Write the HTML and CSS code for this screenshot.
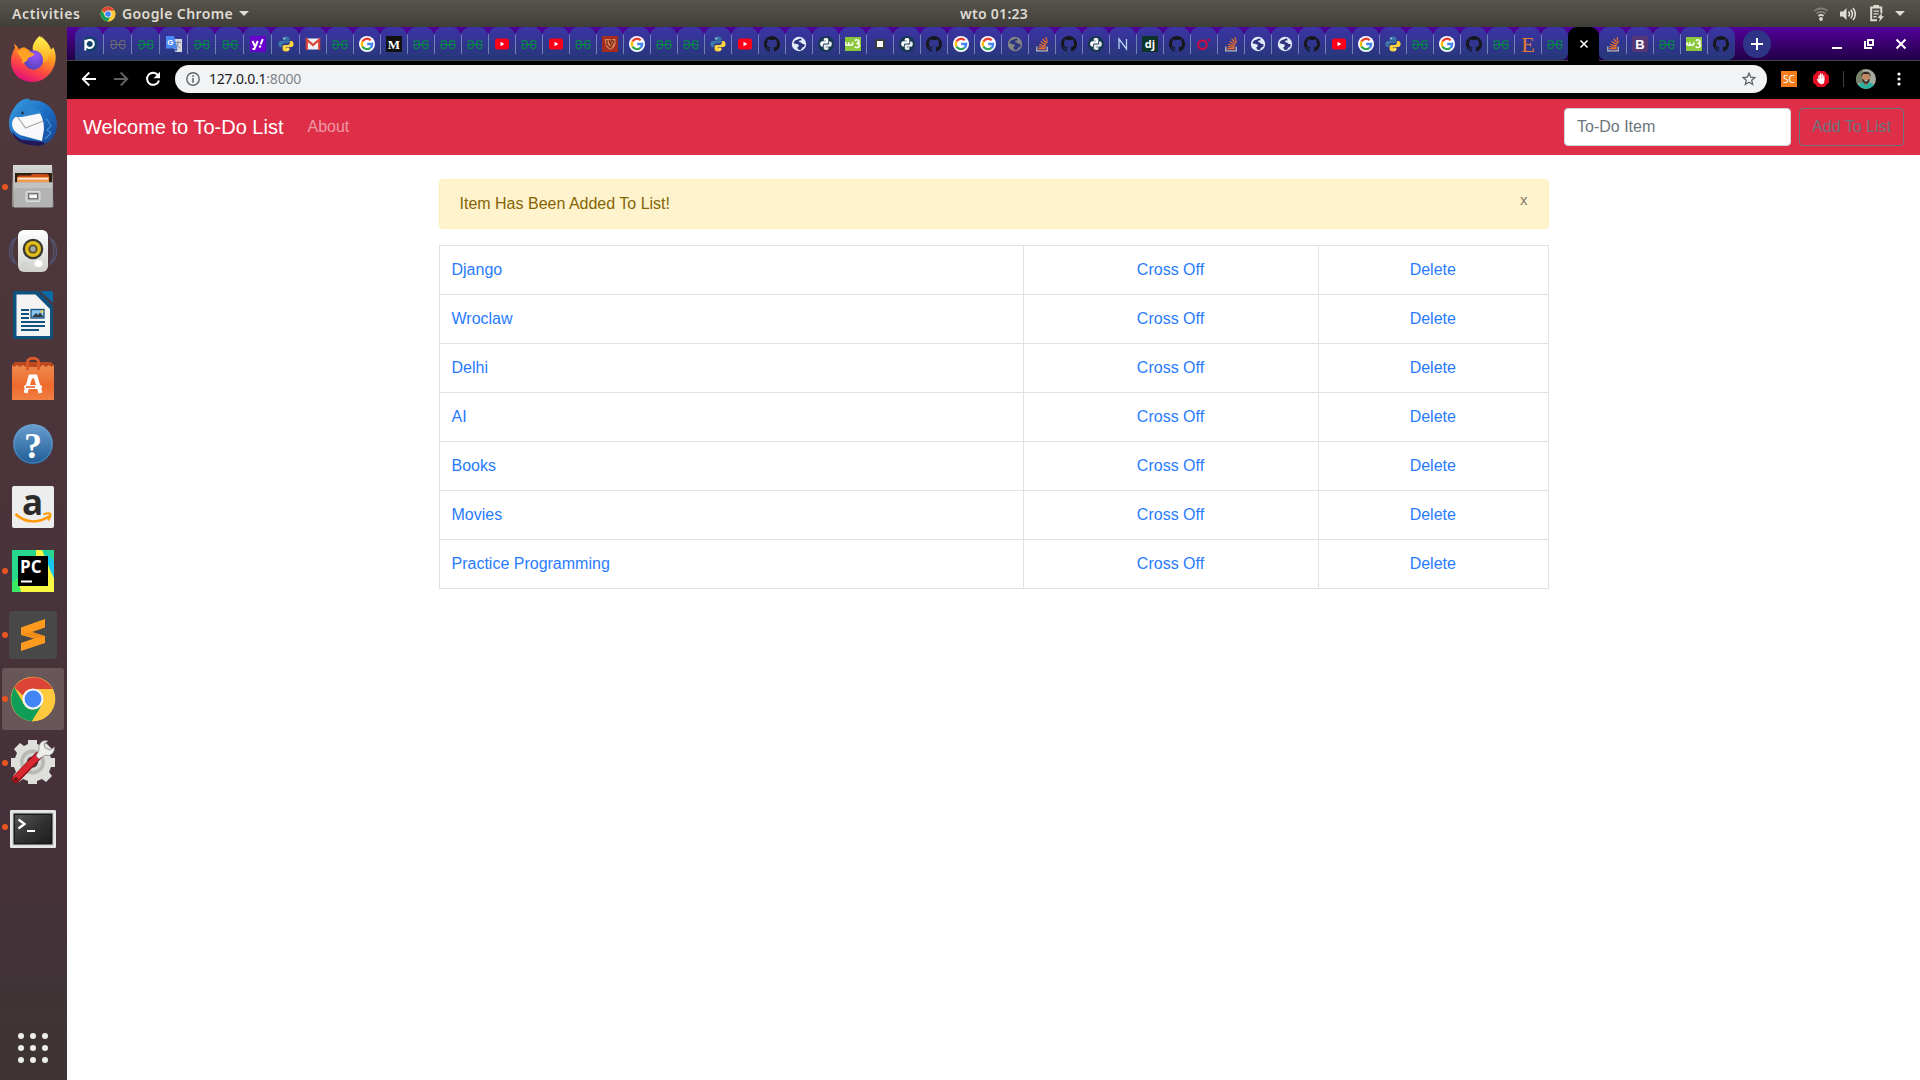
FILE: index.html
```html
<!DOCTYPE html>
<html lang="en">
<head>
<meta charset="utf-8">
<title>To-Do List</title>
<link rel="stylesheet" href="styles.css">
</head>
<body>
<svg class="sprite" aria-hidden="true">
  <defs>
    <linearGradient id="g-fox" x1=".8" y1="0" x2=".35" y2="1"><stop offset="0" stop-color="#fff44f"/><stop offset=".4" stop-color="#ff9a1f"/><stop offset=".7" stop-color="#ff4a41"/><stop offset="1" stop-color="#e2107b"/></linearGradient>
    <linearGradient id="g-flame" x1="0" y1="0" x2="0" y2="1"><stop offset="0" stop-color="#fff44f"/><stop offset="1" stop-color="#ffa41f"/></linearGradient>
    <radialGradient id="g-orb" cx=".6" cy=".3" r=".8"><stop offset="0" stop-color="#9a55f5"/><stop offset="1" stop-color="#4a3fb5"/></radialGradient>
    <linearGradient id="g-bird" x1="0" y1="0" x2="1" y2="1"><stop offset="0" stop-color="#3aa0e0"/><stop offset=".5" stop-color="#1d6fc4"/><stop offset="1" stop-color="#1b3f8c"/></linearGradient>
    <linearGradient id="g-steel" x1="0" y1="0" x2="0" y2="1"><stop offset="0" stop-color="#d8d8d8"/><stop offset="1" stop-color="#8f8f8f"/></linearGradient>
    <linearGradient id="g-white" x1="0" y1="0" x2="0" y2="1"><stop offset="0" stop-color="#fff"/><stop offset="1" stop-color="#cfcfcb"/></linearGradient>
    <linearGradient id="g-bag" x1="0" y1="0" x2="0" y2="1"><stop offset="0" stop-color="#ee8a4e"/><stop offset=".6" stop-color="#ee6a2c"/><stop offset="1" stop-color="#ef8044"/></linearGradient>
    <linearGradient id="g-help" x1="0" y1="0" x2="0" y2="1"><stop offset="0" stop-color="#6a9fd0"/><stop offset="1" stop-color="#1f5c95"/></linearGradient>
    <linearGradient id="g-dark" x1="0" y1="0" x2="1" y2="1"><stop offset="0" stop-color="#555"/><stop offset=".5" stop-color="#333"/><stop offset="1" stop-color="#1c1c1c"/></linearGradient>
    <linearGradient id="g-py" x1="0" y1="0" x2="1" y2="1"><stop offset="0" stop-color="#4b8bc0"/><stop offset="1" stop-color="#2c5f8c"/></linearGradient>
  </defs>

  <symbol id="gfg" viewBox="0 0 16 16"><g fill="none" stroke="currentColor" stroke-width="1.100"><path d="M14.700 6.800V4.500M14.700 6.200C13.600 3.700 9.400 3.800 9.400 8.400s4 4.900 5.300 3.300V8.500M1.300 6.800V4.500M1.300 6.200C2.400 3.700 6.600 3.800 6.600 8.400s-4 4.900-5.300 3.300V8.500"/><path d="M0 8.500h16"/></g></symbol>
  <symbol id="youtube" viewBox="0 0 16 16"><rect x="1" y="2.500" width="14" height="11" rx="2.500" fill="#ff0018"/><path d="M6.500 5.700v4.600L10.300 8z" fill="#fff"/></symbol>
  <symbol id="google" viewBox="0 0 16 16"><circle cx="8" cy="8" r="8" fill="#fff"/><g fill="none" stroke-width="2.300"><path d="M11.700 4.300A5.200 5.200 0 0 0 3.500 5.400" stroke="#ea4335"/><path d="M3.500 5.400a5.200 5.200 0 0 0 0 5.200" stroke="#fbbc05"/><path d="M3.500 10.600a5.200 5.200 0 0 0 7.900 1.300" stroke="#34a853"/><path d="M11.400 11.900A5.200 5.200 0 0 0 13.200 8H8.200" stroke="#4285f4"/></g></symbol>
  <symbol id="python" viewBox="0 0 16 16"><path d="M8 .5C5 .500 4.600 1.600 4.600 2.800v1.600h3.600V5H2.800C1.200 5 .400 6.400.400 8.200s.800 3 2.200 3h1.500V9.400c0-1.200 1-2.100 2.200-2.100h3.500c1 0 1.700-.8 1.700-1.700V2.800C11.500 1.300 10 .500 8 .500z" fill="url(#g-py)"/><path d="M8 15.500c3 0 3.500-1 3.500-2.200v-1.700H7.800V11h5.400c1.600 0 2.400-1.300 2.400-3s-.7-3.100-2.200-3.100h-1.500v1.800c0 1.200-1 2.200-2.200 2.200H6.300c-1 0-1.700.800-1.700 1.700v2.700c0 1.500 1.400 2.200 3.400 2.200z" fill="#ffd43b"/><circle cx="6.300" cy="2.600" r=".7" fill="#fff"/><circle cx="9.800" cy="13.400" r=".7" fill="#fff"/></symbol>
  <symbol id="pyround" viewBox="0 0 16 16"><circle cx="8" cy="8" r="8" fill="#173852"/><path d="M8 2C5.900 2 5.700 2.900 5.700 3.700v1h2.500v.6H4.300C3 5.300 2.200 6.300 2.200 8s.700 2.400 1.600 2.400h1.100V9.200c0-.9.700-1.600 1.600-1.600h2.600c.700 0 1.200-.5 1.200-1.200V3.700C10.300 2.600 9.400 2 8 2z" fill="#fff"/><path d="M8.200 14c2 0 2.300-.8 2.300-1.600v-1.100H8v-.6h3.900c1.300 0 1.900-.9 1.900-2.600s-.6-2.500-1.500-2.500h-1.200v1.300c0 .9-.7 1.600-1.600 1.600H6.900c-.7 0-1.200.5-1.200 1.200v2.600c0 1.100 1 1.700 2.500 1.700z" fill="#e3e9ee"/></symbol>
  <symbol id="github" viewBox="0 0 16 16"><path fill="#15171b" d="M8 0C3.580 0 0 3.580 0 8c0 3.540 2.290 6.530 5.470 7.590.4.070.55-.17.55-.38 0-.19-.01-.82-.01-1.490-2.010.37-2.530-.49-2.690-.94-.09-.23-.48-.94-.82-1.130-.28-.15-.68-.52-.01-.53.63-.01 1.080.58 1.230.82.72 1.210 1.870.87 2.330.66.07-.52.280-.87.510-1.070-1.780-.2-3.640-.89-3.640-3.950 0-.87.310-1.590.820-2.150-.08-.2-.36-1.020.08-2.120 0 0 .67-.21 2.200.820a7.640 7.640 0 0 1 4 0c1.530-1.040 2.200-.82 2.200-.82.440 1.100.160 1.920.080 2.120.510.560.820 1.270.820 2.150 0 3.070-1.870 3.750-3.650 3.950.290.250.540.730.540 1.480 0 1.070-.01 1.930-.01 2.200 0 .210.150.460.550.380A8 8 0 0 0 8 0z"/></symbol>
  <symbol id="globe" viewBox="0 0 16 16"><circle cx="8" cy="8" r="7.200" fill="currentColor"/><path d="M9.500 2.300 6.200 3.800 4 4.500 2.300 7.200l3.200.8 2 .4.300 2-1.600.8 1 2.500 2.600.3 1.600-2.400 1.800-.8.500-2.600-2.500-.4L10 6.400 8 6l.5-1.400 2.500-.3z" fill="#2e3580"/></symbol>
  <symbol id="w3" viewBox="0 0 16 16"><rect y="1" width="16" height="14" fill="#8cc83c"/><path d="M.8 6.300v1.400c0 2.200 3 2.200 3 0V6.300v1.400c0 2.200 3.400 2.200 4 0V6.300M9.800 4.600C11 3.500 14 3.500 14 5.400c0 1.400-1.500 1.900-2.600 1.900 1.500 0 3 .6 3 2.300 0 2.300-3.500 2.600-4.800 1" fill="none" stroke="#fff" stroke-width="1.500"/></symbol>
  <symbol id="stack" viewBox="0 0 16 16"><path d="M2.800 10.500v4.300h10.400v-4.300" fill="none" stroke="#bcb8b4" stroke-width="1.300"/><path d="M4.500 12.700h7M4.700 10.600l6.800.7M5.300 8.300l6.300 1.900M6.700 5.600l5.400 3.300M8.800 3l3.900 4.700M11.800 1.200l1.600 5.500" stroke="#f2702a" stroke-width="1.200"/></symbol>
  <symbol id="chrome" viewBox="0 0 48 48"><circle cx="24" cy="24" r="22.300" fill="#ffca3e"/><path d="M5.300 12.500A22.300 22.300 0 0 1 43.600 14H24A10.500 10.500 0 0 0 14 20.500z" fill="#db4437"/><path d="M5.300 12.500A22.300 22.300 0 0 0 23 46.200L33 30 24 34.500a10.500 10.500 0 0 1-9.100-5.200z" fill="#109d58"/><path d="m33.500 29-10.500 17.200a22.300 22.300 0 0 0 20.600-32.200H24z" fill="#ffca3e"/><circle cx="24" cy="24" r="10.500" fill="#f4f5f8"/><circle cx="24" cy="24" r="8.400" fill="#4285f4"/></symbol>
</svg>

<header class="topbar">
  <span class="activities">Activities</span>
  <div class="app-menu"><svg class="app-icon"><use href="#chrome"/></svg><span class="app-name">Google Chrome</span><i class="caret"></i></div>
  <span class="clock">wto 01:23</span>
  <div class="status">
    <svg class="wifi" width="14" height="14" viewBox="0 0 14 14" fill="none" stroke-width="1.700"><path d="M.5 4C4 .5 10 .5 13.500 4M2.500 6.500c2.500-2.200 6.500-2.200 9 0" stroke="#85827b"/><path d="M4.500 9c1.500-1.300 3.500-1.300 5 0" stroke="#dfdbd2"/><circle cx="7" cy="12" r="1.900" fill="#dfdbd2"/></svg>
    <svg width="16" height="14" viewBox="0 0 16 14"><path d="M0 4.500h3L6.500 1v12L3 9.500H0z" fill="#dfdbd2"/><path d="M8.500 4.500c1.200 1.500 1.200 3.500 0 5M10.800 2.700c2 2.600 2 6 0 8.600M13 1c3 3.500 3 8.500 0 12" fill="none" stroke="#dfdbd2" stroke-width="1.600"/></svg>
    <svg width="14" height="17" viewBox="0 0 14 17"><path d="M11.300 8V2.500H1.200v12.800H7" fill="none" stroke="#dfdbd2" stroke-width="2"/><path d="M3.500 0H9v2H3.500zM3.500 5.500h5.500v1.300H3.500zM3.500 8.300h5v1.300h-5zM3.500 11.100h3v1.300h-3zM12 7.500 7.500 13H10l-1 4 5-5.700h-2.500z" fill="#dfdbd2"/></svg>
    <i class="caret"></i>
  </div>
</header>

<div class="desktop">
  <nav class="dock">
    <a class="dock-item"><svg viewBox="0 0 48 48"><path d="M5 8.500C7 10 9 12.500 10 14.500c1.600-1.600 3.500-2.300 5.500-2.300l8 5 7-12C32 2.500 34 .8 31.500 1c2.500 2 9 7.500 10.500 13.500 1.500-.8 2-2.500 2-2.500 3 5 4 13 .5 20.500C40.800 41 33 47 23.500 47 11 47 2 38 2 26.500 2 19 5 15 6 12.700z" fill="url(#g-fox)"/><path d="M30.500 1C24 7 22 13 25 18c3 3 8 4 9.500 10 3-2 7-6 7-12.500C40.500 9 34 5 30.500 1z" fill="url(#g-flame)"/><circle cx="24.500" cy="25" r="9.700" fill="url(#g-orb)"/><path d="M8 17c4-3 8-3 11-1.500 1.500 1.800 4 2 6.500 3.500-1 2.500-4 3-6.500 4 0 3-3.500 4.500-6 5.500 1.500-3-2-7-5-11.500z" fill="#ffa326"/></svg></a>
    <a class="dock-item"><svg viewBox="0 0 48 48"><path d="M8 5C13 0 17-.5 21 0l-1 1.500C36-1 48 11 48 25c0 13-8 20-18 22l3-3-8 1C10 44 0 37 0 24 0 15 5 9 8 5z" fill="url(#g-bird)"/><path d="M3 32c4 6 8 9 13 9l18 2 2 2-6 2C15 46 5 43 3 32z" fill="#231755"/><path d="M3 24c1-5 4-7 7-7l20-4c3 4 5 10 5 17l-2 12-22-6c-5-3-8-6-8-12z" fill="#f8f8fb"/><path d="m8 17 8.500 12L34 22" fill="none" stroke="#aaa" stroke-width="1.200"/><path d="M7 18C9 8 15 5 22 7l13 8-2-1-20 4z" fill="#2d83cd"/><path d="m37 19 5 8-4 4 4 3-6 6" fill="none" stroke="#3d91d8" stroke-width="1.200"/><circle cx="13.500" cy="14" r="1.400" fill="#24364b"/></svg></a>
    <a class="dock-item is-running"><svg viewBox="0 0 48 48"><path d="M4 2h39l1.500 42H3z" fill="url(#g-steel)"/><path d="M6 10h37v10H6z" fill="#30200f"/><path d="M9 12.500h13l1-1.500h15l2 1.500v8H9z" fill="#cc4b1c"/><path d="M8 14h32v7H8z" fill="#f09a50"/><path d="M9 15.800h30" stroke="#fff" stroke-width="1.200"/><path d="M5 19.500h38.500V44.500H5z" fill="#b3b3b3"/><path d="M5 19.500h38.500V25H5z" fill="#c2c2c2"/><rect x="17" y="28.500" width="14" height="10" rx="1" fill="#c9c9c9" stroke="#dedede"/><rect x="19.700" y="30.800" width="9" height="5" fill="#f5f5f5" stroke="#4c4c4c"/></svg></a>
    <a class="dock-item"><svg viewBox="0 0 48 48"><g fill="none" stroke="#566596" stroke-width="1.300" opacity=".65"><path d="M8 10C2 16 1 30 8 38M5 12c-6 7-6 18 0 24M40 10c6 6 7 20 0 28M43 12c6 7 6 18 0 24"/></g><rect x="9" y="3" width="30" height="42" rx="6" fill="url(#g-white)"/><circle cx="24" cy="22" r="10.300" fill="#393931"/><circle cx="24" cy="22" r="8" fill="#e0bd1c"/><circle cx="24" cy="22" r="4.600" fill="#5a5122"/><circle cx="24" cy="22" r="2.700" fill="#aaa"/><ellipse cx="29.500" cy="36.500" rx="4" ry="3.500" fill="#fff"/><rect x="14" y="36" width="4" height="4" rx="1" fill="none" stroke="#ccc"/></svg></a>
    <a class="dock-item"><svg viewBox="0 0 48 48"><path d="M6 0h23l15 15v31a2 2 0 0 1-2 2H6a2 2 0 0 1-2-2V2a2 2 0 0 1 2-2z" fill="#10527e"/><path d="M31 0h11a2 2 0 0 1 2 2v10z" fill="#0b6aa5"/><path d="M7.500 3.500h19L41 18v27H7.500z" fill="#f4f4f4"/><path d="M12 18h8v2h-8zM12 22h8v2h-8zM12 26h8v2h-8zM12 30h24v2H12zM12 34h24v2H12zM12 38h18v2H12z" fill="#15527d"/><rect x="22" y="18.500" width="13" height="8.500" fill="#8ac6ee" stroke="#15527d" stroke-width="1.300"/><path d="m23 26 4-4 2 2 2-2.500 3.500 4.500z" fill="#303d47"/><circle cx="33" cy="20.500" r="1.500" fill="#f2c63c"/></svg></a>
    <a class="dock-item"><svg viewBox="0 0 48 48"><path d="M3 10h42v35H3z" fill="url(#g-bag)"/><path d="m3 10 3-3h36l3 3-2 2-3-2-3 2-3-2-3 2H17l-3-2-3 2-3-2-3 2z" fill="#b9481c"/><path d="M18.500 15V7c0-5 11-5 11 0v8" fill="none" stroke="#d9592a" stroke-width="3"/><path d="m16.500 38 5-16.500h5l5 16.500" fill="none" stroke="#fff" stroke-width="4"/><rect x="15" y="30" width="18" height="4" rx="2" fill="#fff"/><path d="M17 32h9" stroke="#e05b20" stroke-width="1.500"/></svg></a>
    <a class="dock-item"><svg viewBox="0 0 48 48"><circle cx="24" cy="25" r="20" fill="url(#g-help)"/><circle cx="24" cy="25" r="19" fill="none" stroke="#78a8d4" stroke-opacity=".5"/><text x="24" y="38.500" text-anchor="middle" class="glyph-help">?</text></svg></a>
    <a class="dock-item"><svg viewBox="0 0 48 48"><rect x="3" y="3" width="42" height="42" rx="2" fill="#ededed"/><text x="23.500" y="31.500" text-anchor="middle" class="glyph-amazon">a</text><path d="M6.500 31C17 41 31 40 40.500 33" fill="none" stroke="#ff9900" stroke-width="2.500"/><path d="M34.500 31.200c4-1.200 6.500-.7 7 0s-.8 4.200-2.500 6.200" fill="none" stroke="#ff9900" stroke-width="2"/></svg></a>
    <a class="dock-item is-running"><svg viewBox="0 0 48 48"><path d="M3 3h42v42H3z" fill="#26d78d"/><path d="m33 3 12 14v16l-6 2V9z" fill="#14c8ef"/><path d="M27 3h6l9 22 3 6v14H3V37l24-22z" fill="#f8f843"/><path d="m39 9 6 22V14L35 3z" fill="#18c6ee"/><path d="m3 36 6-5 3 14H3z" fill="#3bea62"/><path d="M9 9h30v30H9z" fill="#000"/><text x="11" y="25.500" class="glyph-pc">PC</text><path d="M12 34.500h11" stroke="#fff" stroke-width="2"/></svg></a>
    <a class="dock-item is-running"><svg viewBox="0 0 48 48"><rect width="48" height="48" rx="3" fill="#484848"/><path d="m12 16.500 24-8.500v8.500L23 21l13 4v7L12 40v-8l13-4.500L12 24z" fill="#ff9a1f"/><path d="m12 23 11-2 13 4.500L25 27.500z" fill="#f18d18"/></svg></a>
    <a class="dock-item is-running is-active"><svg><use href="#chrome"/></svg></a>
    <a class="dock-item is-running"><svg viewBox="0 0 48 48"><path d="M19 5V1h9v4l5 2 4-3 6 6-3 4 2 5h4v9h-4l-2 5 3 4-6 6-4-3-5 2v3h-9v-3l-5-2-4 3-6-6 3-4-2-5H2v-9h4l2-5-3-4 6-6 4 3z" fill="#dededb"/><circle cx="23.500" cy="23" r="12.500" fill="#b8b8b5"/><circle cx="23.500" cy="23" r="9" fill="#d5d5d3"/><circle cx="23.500" cy="23" r="5.500" fill="#3f3135"/><path d="m7 40 22-23" stroke="#8e1218" stroke-width="8" stroke-linecap="round"/><path d="m7 39 22-22" stroke="#da2832" stroke-width="6" stroke-linecap="round"/><circle cx="7" cy="40" r="1.800" fill="#521216"/><path d="m27 17 3 3 6-4c5 2 10-2 9.500-8L41 11l-5-2-1-4 4-3c-6-2-10 3-9 9z" fill="#eeeeec" stroke="#777" stroke-width=".7"/></svg></a>
    <a class="dock-item is-running"><svg viewBox="0 0 48 48"><rect x="1" y="7" width="46" height="38" rx="1.500" fill="#d8d8d6"/><rect x="2" y="8" width="44" height="36" fill="none" stroke="#f5f5f4"/><rect x="4.500" y="10.500" width="39" height="31" fill="#171717"/><rect x="6" y="12" width="36" height="28" fill="url(#g-dark)"/><path d="m9.500 16.500 6 4.500-6 4.500" fill="none" stroke="#fff" stroke-width="2.300"/><path d="M18 28h8" stroke="#fff" stroke-width="2"/></svg></a>
    <a class="apps-button"><i></i><i></i><i></i><i></i><i></i><i></i><i></i><i></i><i></i></a>
  </nav>

  <div class="window">
    <div class="tabstrip">
      <ul class="tabs">
        <li class="tab wide first"><svg viewBox="0 0 16 16"><circle cx="8" cy="8" r="7.500" fill="#10416b"/><path d="M2.400 14.500V3.800M2.800 7.500a4 4 0 1 1 0 .8" transform="translate(1)" fill="none" stroke="#fff" stroke-width="2.100"/></svg></li>
        <li class="tab wide"><svg class="gray"><use href="#gfg"/></svg></li>
        <li class="tab wide"><svg class="green"><use href="#gfg"/></svg></li>
        <li class="tab wide"><svg viewBox="0 0 16 16"><path d="M7 3h9v13H9z" fill="#d9d9dc"/><path d="M0 0h8l3.500 12.500H0z" fill="#4a89f3"/><path d="M11.500 12.500 8.500 13l1.500 3z" fill="#2b59b5"/><text x="1.300" y="9" class="glyph-tr">G</text><path d="M9.500 6.500H15M12 5v1.500c0 3-1 4-1.500 5M10.500 8c1 2 2 3 4 4" fill="none" stroke="#6d8290" stroke-width=".8"/></svg></li>
        <li class="tab wide"><svg class="green"><use href="#gfg"/></svg></li>
        <li class="tab wide"><svg class="green"><use href="#gfg"/></svg></li>
        <li class="tab wide"><svg viewBox="0 0 16 16"><path d="M0 0h16v16H0z" fill="#6a00d0"/><path d="m2.500 5 2.300 5M7.800 5l-3.500 8H2.500M12.800 3 10.700 8.300" fill="none" stroke="#fff" stroke-width="2"/><circle cx="10" cy="10.500" r="1.200" fill="#fff"/></svg></li>
        <li class="tab wide"><svg><use href="#python"/></svg></li>
        <li class="tab"><svg viewBox="0 0 16 16"><path d="M1.500 2.500h13v11h-13z" fill="#f3f3f3"/><path d="M1.800 14V3.600L8 9l6.200-5.400V14" fill="none" stroke="#d8433b" stroke-width="2.200"/></svg></li>
        <li class="tab"><svg class="green"><use href="#gfg"/></svg></li>
        <li class="tab"><svg><use href="#google"/></svg></li>
        <li class="tab"><svg viewBox="0 0 16 16"><path d="M0 0h16v16H0z" fill="#12100e"/><text x="8" y="12.500" text-anchor="middle" class="glyph-m">M</text></svg></li>
        <li class="tab"><svg class="green"><use href="#gfg"/></svg></li>
        <li class="tab"><svg class="green"><use href="#gfg"/></svg></li>
        <li class="tab"><svg class="green"><use href="#gfg"/></svg></li>
        <li class="tab"><svg><use href="#youtube"/></svg></li>
        <li class="tab"><svg class="green"><use href="#gfg"/></svg></li>
        <li class="tab"><svg><use href="#youtube"/></svg></li>
        <li class="tab"><svg class="green"><use href="#gfg"/></svg></li>
        <li class="tab"><svg viewBox="0 0 16 16"><path d="M0 0h16v16H0z" fill="#a42d20"/><path d="M2.500 3h11v4.500c0 3-2.500 5-5 6.500-3.500-2-5-4-5-6.500z" fill="#d98457"/><path d="M5 4v4.500L8.500 12 12 5.500 9.500 4l-1 4L7 4" fill="none" stroke="#7c2418" stroke-width="1.200"/></svg></li>
        <li class="tab"><svg><use href="#google"/></svg></li>
        <li class="tab"><svg class="green"><use href="#gfg"/></svg></li>
        <li class="tab"><svg class="green"><use href="#gfg"/></svg></li>
        <li class="tab"><svg><use href="#python"/></svg></li>
        <li class="tab"><svg><use href="#youtube"/></svg></li>
        <li class="tab"><svg><use href="#github"/></svg></li>
        <li class="tab"><svg class="pale"><use href="#globe"/></svg></li>
        <li class="tab"><svg><use href="#pyround"/></svg></li>
        <li class="tab"><svg><use href="#w3"/></svg></li>
        <li class="tab"><svg viewBox="0 0 16 16"><path d="M3 3h10v10H3z" fill="#3a3c40"/><path d="M5 5h6v6H5z" fill="#fff"/></svg></li>
        <li class="tab"><svg><use href="#pyround"/></svg></li>
        <li class="tab"><svg><use href="#github"/></svg></li>
        <li class="tab"><svg><use href="#google"/></svg></li>
        <li class="tab"><svg><use href="#google"/></svg></li>
        <li class="tab"><svg class="dim"><use href="#globe"/></svg></li>
        <li class="tab"><svg><use href="#stack"/></svg></li>
        <li class="tab"><svg><use href="#github"/></svg></li>
        <li class="tab"><svg><use href="#pyround"/></svg></li>
        <li class="tab"><svg viewBox="0 0 16 16"><path d="M4 13V3l7.500 10V3" fill="none" stroke="#b8d4f5" stroke-width="1.300"/></svg></li>
        <li class="tab"><svg viewBox="0 0 16 16"><path d="M0 0h16v16H0z" fill="#0c3428"/><text x="8" y="11.800" text-anchor="middle" class="glyph-dj">dj</text></svg></li>
        <li class="tab"><svg><use href="#github"/></svg></li>
        <li class="tab"><svg viewBox="0 0 16 16"><circle cx="6.500" cy="8.700" r="4.300" fill="none" stroke="#d3083b" stroke-width="2"/><circle cx="12.700" cy="4" r="1.300" fill="#d3083b"/></svg></li>
        <li class="tab"><svg><use href="#stack"/></svg></li>
        <li class="tab"><svg class="pale"><use href="#globe"/></svg></li>
        <li class="tab"><svg class="pale"><use href="#globe"/></svg></li>
        <li class="tab"><svg><use href="#github"/></svg></li>
        <li class="tab"><svg><use href="#youtube"/></svg></li>
        <li class="tab"><svg><use href="#google"/></svg></li>
        <li class="tab"><svg><use href="#python"/></svg></li>
        <li class="tab"><svg class="green"><use href="#gfg"/></svg></li>
        <li class="tab"><svg><use href="#google"/></svg></li>
        <li class="tab"><svg><use href="#github"/></svg></li>
        <li class="tab"><svg class="green"><use href="#gfg"/></svg></li>
        <li class="tab"><svg viewBox="0 0 16 16"><text x="8" y="15.500" text-anchor="middle" class="glyph-e">E</text></svg></li>
        <li class="tab before-active"><svg class="green"><use href="#gfg"/></svg></li>
        <li class="tab active"><svg viewBox="0 0 16 16"><path d="m4.500 4.500 7 7m0-7-7 7" stroke="#fff" stroke-width="1.500"/></svg></li>
        <li class="tab after-active"><svg><use href="#stack"/></svg></li>
        <li class="tab"><svg viewBox="0 0 16 16"><rect width="16" height="16" rx="2.500" fill="#553773"/><text x="8" y="12.700" text-anchor="middle" class="glyph-b">B</text></svg></li>
        <li class="tab"><svg class="green"><use href="#gfg"/></svg></li>
        <li class="tab"><svg><use href="#w3"/></svg></li>
        <li class="tab last"><svg><use href="#github"/></svg></li>
      </ul>
      <button class="new-tab"><svg width="14" height="14" viewBox="0 0 14 14"><path d="M7 1v12M1 7h12" stroke="#fff" stroke-width="2"/></svg></button>
      <div class="window-buttons">
        <svg viewBox="0 0 12 12"><path d="M1 10h10" stroke="#fff" stroke-width="2"/></svg>
        <svg viewBox="0 0 12 12"><path d="M5 2h5v5H5zM3 4H2v6h6V9" fill="none" stroke="#fff" stroke-width="2"/></svg>
        <svg viewBox="0 0 12 12"><path d="m1.500 1.500 9 9m0-9-9 9" stroke="#fff" stroke-width="2"/></svg>
      </div>
    </div>

    <div class="toolbar">
      <div class="nav-buttons">
        <svg viewBox="0 0 16 16"><path d="M15 8H2M8.300 1.500 1.800 8l6.500 6.500" fill="none" stroke="#fff" stroke-width="1.900"/></svg>
        <svg viewBox="0 0 16 16"><path d="M1 8h13M7.700 1.500 14.200 8l-6.500 6.500" fill="none" stroke="#626262" stroke-width="1.900"/></svg>
        <svg viewBox="0 0 16 16"><path d="M13.200 4.300A6.100 6.100 0 1 0 14 9.500" fill="none" stroke="#fff" stroke-width="2"/><path d="M15 .8v6.400H8.600z" fill="#fff"/></svg>
      </div>
      <div class="omnibox">
        <svg class="info" viewBox="0 0 14 14"><circle cx="7" cy="7" r="6.200" fill="none" stroke="#5f6368" stroke-width="1.400"/><path d="M7 6v4.700M7 3.300v1.600" stroke="#5f6368" stroke-width="1.500"/></svg>
        <span class="url">127.0.0.1<span class="port">:8000</span></span>
        <svg class="star" viewBox="0 0 14 14"><path d="m7 1.200 1.700 3.900 4.200.4-3.200 2.800 1 4.200L7 10.300l-3.700 2.200 1-4.200L1.100 5.500l4.200-.4z" fill="none" stroke="#5f6368" stroke-width="1.300"/></svg>
      </div>
      <div class="extensions">
        <span class="sc">SC</span>
        <svg class="adblock" viewBox="0 0 16 16"><path d="M4.700 0h6.600L16 4.700v6.600L11.300 16H4.700L0 11.300V4.700z" fill="#e40d22"/><path d="M6 8.500V4.600M7.600 8V3M9.200 8V3.200M10.800 8.500V4.800" stroke="#fff" stroke-width="1.300" stroke-linecap="round"/><path d="m3.800 8.300 1.100-.6 1 1 .5-1.200h5V10c0 2-1 3.300-3 3.300C6.500 13.300 5 11 3.800 8.300z" fill="#fff"/></svg>
        <i class="divider"></i>
        <svg class="avatar" viewBox="0 0 20 20"><path d="M0 0h20v20H0z" fill="#a5ab9f"/><path d="M0 0h7v14H0z" fill="#75836a"/><path d="M1 20c0-5 4-7 9-7s9 2 9 7z" fill="#29b0a0"/><path d="M8 12h4v3l-2 1.500L8 15z" fill="#a36b50"/><ellipse cx="10" cy="8.500" rx="4" ry="5.300" fill="#c08763"/><path d="M5.500 8C4 1 16 1 14.500 8L13 5H7zM6.200 9.500 8 11h4l1.800-1.500c0 3-1.500 5-3.800 5s-3.800-2-3.800-5z" fill="#34251f"/><path d="M8.500 11.800h3" stroke="#fff"/></svg>
        <svg class="menu" viewBox="0 0 4 14"><circle cx="2" cy="2" r="1.600" fill="#fff"/><circle cx="2" cy="7" r="1.600" fill="#fff"/><circle cx="2" cy="12" r="1.600" fill="#fff"/></svg>
      </div>
    </div>

    <main class="page">
      <nav class="navbar">
        <a class="brand">Welcome to To-Do List</a>
        <a class="nav-link">About</a>
        <form class="add-form">
          <input class="item-input" type="text" placeholder="To-Do Item">
          <button class="add-button" type="button">Add To List</button>
        </form>
      </nav>
      <div class="container">
        <div class="alert"><span>Item Has Been Added To List!</span><button class="close">x</button></div>
        <table class="items">
          <colgroup><col class="col-name"><col class="col-cross"><col class="col-delete"></colgroup>
          <tbody>
            <tr><td><a>Django</a></td><td><a>Cross Off</a></td><td><a>Delete</a></td></tr>
            <tr><td><a>Wroclaw</a></td><td><a>Cross Off</a></td><td><a>Delete</a></td></tr>
            <tr><td><a>Delhi</a></td><td><a>Cross Off</a></td><td><a>Delete</a></td></tr>
            <tr><td><a>AI</a></td><td><a>Cross Off</a></td><td><a>Delete</a></td></tr>
            <tr><td><a>Books</a></td><td><a>Cross Off</a></td><td><a>Delete</a></td></tr>
            <tr><td><a>Movies</a></td><td><a>Cross Off</a></td><td><a>Delete</a></td></tr>
            <tr><td><a>Practice Programming</a></td><td><a>Cross Off</a></td><td><a>Delete</a></td></tr>
          </tbody>
        </table>
      </div>
    </main>
  </div>
</div>
</body>
</html>
```
FILE: styles.css
```css
*, *::before, *::after { box-sizing: border-box; }

body {
  margin: 0;
  width: 1920px;
  height: 1080px;
  overflow: hidden;
  display: flex;
  flex-direction: column;
  background: #fff;
  font-family: "Liberation Sans", Arial, sans-serif;
  font-size: 16px;
  line-height: 24px;
}

svg { display: block; flex: none; }
button { font: inherit; cursor: pointer; }
.sprite { position: absolute; width: 0; height: 0; }

/* System top bar */
.topbar {
  height: 27px;
  flex: none;
  display: grid;
  grid-template-columns: 100px 860px 1fr auto;
  align-items: center;
  background: linear-gradient(#59554d, #3f3e39);
  color: #dfdbd2;
  font: 600 14px/27px "Noto Sans", sans-serif;
}
.activities { padding-left: 12px; letter-spacing: 0.6px; }
.app-menu { display: flex; align-items: center; gap: 6px; }
.app-icon { width: 16px; height: 16px; }
.app-name { letter-spacing: 0.4px; }
.caret {
  border: 5px solid transparent;
  border-top-color: #dfdbd2;
  border-bottom: 0;
}
.clock { letter-spacing: 0.3px; }
.status { display: flex; align-items: center; gap: 14px; padding-right: 15px; }
.status .wifi { margin-right: -2px; }
.status .caret { margin-left: -3px; }

.desktop { flex: 1; display: flex; min-height: 0; }

/* Dock */
.dock {
  width: 67px;
  flex: none;
  display: flex;
  flex-direction: column;
  background: linear-gradient(#50383b, #4a343a 45%, #47313a 75%, #3e3435 97%);
}
.dock-item {
  position: relative;
  width: 62px;
  height: 62px;
  margin: 1px 0 1px 2px;
  display: flex;
  align-items: center;
  justify-content: center;
  border-radius: 3px;
}
.dock-item svg { width: 48px; height: 48px; overflow: visible; }
.dock-item.is-active { background: #695659; }
.dock-item.is-running::before {
  content: "";
  position: absolute;
  left: 0;
  top: 28px;
  width: 6px;
  height: 6px;
  border-radius: 50%;
  background: #e95420;
}
.apps-button {
  margin: auto auto 17px 18px;
  display: grid;
  grid-template-columns: repeat(3, 6px);
  gap: 6px;
}
.apps-button i { width: 6px; height: 6px; border-radius: 50%; background: #eeeeec; }

/* Browser window */
.window { flex: 1; display: flex; flex-direction: column; min-width: 0; }

.tabstrip {
  height: 34px;
  flex: none;
  display: flex;
  padding-left: 8px;
  border-bottom: 1px solid #45454b;
  background: linear-gradient(#52009b, #220046);
}
.tabs { display: flex; margin: 0; padding: 0; list-style: none; }
.tab {
  width: 27px;
  height: 33px;
  padding: 9px 0 0 6px;
  border-radius: 9px 9px 0 0;
  background:
    linear-gradient(#6f83b4, #6f83b4) 0 7px / 1px 20px no-repeat,
    linear-gradient(#3c33a5, #263878);
}
.tab svg { width: 16px; height: 16px; overflow: visible; }
.tab.wide { width: 28px; padding-left: 7px; }
.tab.first, .tab.after-active { background: linear-gradient(#3c33a5, #263878); }
.tab.before-active { border-bottom-right-radius: 7px; }
.tab.after-active { border-bottom-left-radius: 7px; }
.tab.last { width: 28px; border-bottom-right-radius: 7px; }
.tab.active {
  width: 31px;
  height: 34px;
  margin-bottom: -1px;
  padding-left: 8px;
  background: #000;
}
.green { color: #078a43; }
.gray { color: #6c6a73; }
.pale { color: #e4edfa; }
.dim { color: #858585; }

.new-tab {
  width: 28px;
  height: 28px;
  margin: 3px 0 0 8px;
  padding: 7px;
  border: 0;
  border-radius: 50%;
  background: #303487;
}
.window-buttons { display: flex; gap: 20px; margin: 11px 13px 0 auto; }
.window-buttons svg { width: 12px; height: 12px; }

.toolbar {
  height: 38px;
  flex: none;
  display: flex;
  align-items: center;
  padding: 0 19px 2px 6px;
  background: #000;
}
.nav-buttons { display: flex; gap: 16px; padding: 0 14px 0 8px; }
.nav-buttons svg { width: 16px; height: 16px; }
.omnibox {
  flex: 1;
  height: 28px;
  display: flex;
  align-items: center;
  padding: 0 11px;
  border-radius: 14px;
  background: #f1f3f4;
  font: 14px/28px "Noto Sans", sans-serif;
}
.info { width: 14px; height: 14px; }
.url { padding-left: 9px; letter-spacing: -0.22px; color: #202124; }
.port { color: #80868b; }
.star { width: 14px; height: 14px; margin-left: auto; }
.extensions { display: flex; align-items: center; padding-left: 14px; }
.sc {
  width: 16px;
  height: 16px;
  margin-right: 16px;
  background: #f57c1b;
  color: #fff;
  font: 10px/16px "Noto Sans", sans-serif;
  text-align: center;
}
.adblock { width: 16px; height: 16px; }
.divider { width: 1px; height: 16px; margin: 0 12px 0 14px; background: #3d3d3d; }
.avatar { width: 20px; height: 20px; border-radius: 50%; }
.menu { width: 4px; height: 14px; margin-left: 21px; }

/* Page */
.page { flex: 1; background: #fff; }
.navbar {
  height: 56px;
  display: flex;
  align-items: center;
  padding: 0 16px;
  background: #df2e48;
}
.brand { margin-right: 16px; font-size: 20px; line-height: 30px; color: #fff; }
.nav-link { padding: 0 8px; color: rgba(255, 255, 255, 0.5); }
.add-form { display: flex; gap: 8px; margin-left: auto; }
.item-input {
  width: 227px;
  height: 38px;
  padding: 6px 12px;
  border: 1px solid #ced4da;
  border-radius: 4px;
  background: #fff;
  font: inherit;
}
.item-input::placeholder { color: #6c757d; opacity: 1; }
.add-button {
  width: 105px;
  height: 38px;
  padding: 0;
  border: 1px solid #6c757d;
  border-radius: 4px;
  background: transparent;
  color: #6c757d;
}

.container { width: 1110px; margin: 0 auto; padding-top: 24px; }
.alert {
  height: 50px;
  display: flex;
  justify-content: space-between;
  margin-bottom: 16px;
  padding: 12px 20px;
  border: 1px solid #ffeeba;
  border-radius: 4px;
  background: #fff3cd;
  color: #856404;
}
.close {
  height: 18px;
  margin-top: -1px;
  padding: 0;
  border: 0;
  background: none;
  color: #7f7967;
  font-size: 15px;
  line-height: 18px;
}

.items {
  width: 1109px;
  table-layout: fixed;
  border-collapse: collapse;
}
.items td { height: 49px; padding: 12px; border: 1px solid #dee2e6; text-align: center; }
.items td:first-child { text-align: left; }
.items td:not(:first-child) { padding-right: 13px; }
.items a { color: #287bff; }
.col-name { width: 584.5px; }
.col-cross { width: 295px; }
.col-delete { width: 229.5px; }

/* Lettering inside icons */
.glyph-help { font: bold 36px "Liberation Serif", serif; fill: #fff; }
.glyph-amazon { font: bold 35px "Open Sans", sans-serif; fill: #2b2b2b; }
.glyph-pc { font: bold 17px "Open Sans", sans-serif; fill: #fff; }
.glyph-tr { font: bold 8px "Liberation Sans", sans-serif; fill: #fff; }
.glyph-m { font: bold 13px "Liberation Serif", serif; fill: #fff; }
.glyph-dj { font: bold 11px "Open Sans", sans-serif; fill: #fff; }
.glyph-e { font: 22px "Liberation Serif", serif; fill: #e27a38; }
.glyph-b { font: bold 13px "Liberation Sans", sans-serif; fill: #fff; }
```
